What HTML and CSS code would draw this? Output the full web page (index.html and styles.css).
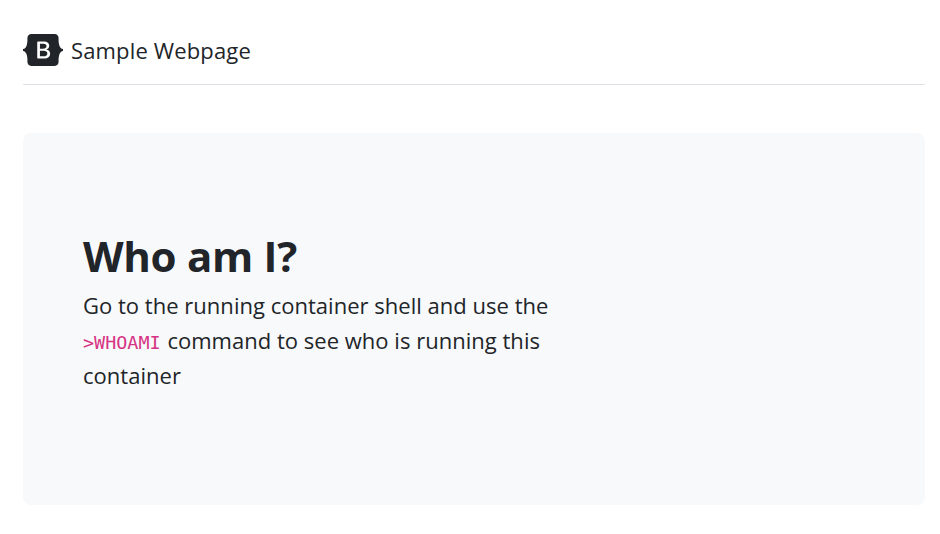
FILE: index.html
```html
<!DOCTYPE html>
<html lang="en">
<head>
<meta charset="utf-8">
<title>Sample Webpage</title>
<link rel="stylesheet" href="styles.css">
</head>
<body>
<main class="container">
  <header class="header">
    <a class="brand" href="#">
      <svg class="logo" width="40" height="32" viewBox="0 0 118 94" role="img" aria-label="Bootstrap"><path fill-rule="evenodd" clip-rule="evenodd" fill="currentColor" d="M24.509 0c-6.733 0-11.715 5.893-11.492 12.284.214 6.14-.064 14.092-2.066 20.577C8.943 39.365 5.547 43.485 0 44.014v5.972c5.547.529 8.943 4.649 10.951 11.153 2.002 6.485 2.28 14.437 2.066 20.577C12.794 88.106 17.776 94 24.51 94H93.5c6.733 0 11.714-5.893 11.491-12.284-.214-6.14.064-14.092 2.066-20.577 2.009-6.504 5.396-10.624 10.943-11.153v-5.972c-5.547-.529-8.934-4.649-10.943-11.153-2.002-6.484-2.28-14.437-2.066-20.577C105.214 5.894 100.233 0 93.5 0H24.508zM80 57.863C80 66.663 73.436 72 62.543 72H44a2 2 0 01-2-2V24a2 2 0 012-2h18.437c9.083 0 15.044 4.92 15.044 12.474 0 5.302-4.01 10.049-9.119 10.88v.277C75.317 46.394 80 51.21 80 57.863zM60.521 28.34H49.948v14.934h8.905c6.884 0 10.68-2.772 10.68-7.727 0-4.643-3.264-7.207-9.012-7.207zM49.948 49.2v16.458H60.91c7.167 0 10.964-2.876 10.964-8.281 0-5.406-3.903-8.178-11.425-8.178H49.948z"/></svg>
      <span class="title">Sample Webpage</span>
    </a>
  </header>
  <section class="hero">
    <h1 class="heading">Who am I?</h1>
    <p class="lead">Go to the running container shell and use the<br><code class="command">&gt;WHOAMI</code> command to see who is running this<br>container</p>
  </section>
</main>
</body>
</html>
```
FILE: styles.css
```css
* { box-sizing: border-box; }
body { margin: 0; background: #fff; color: #212529; font-family: "Open Sans", sans-serif; }
.container { padding: 32px 15px 0 23px; }
.header { height: 53px; border-bottom: 1px solid #dee2e6; margin-bottom: 48px; }
.brand { display: flex; align-items: center; height: 36px; color: inherit; text-decoration: none; }
.logo { margin-right: 8px; }
.title { font-size: 22px; line-height: 36px; font-weight: 400; letter-spacing: 0.15px; white-space: nowrap; }
.hero { height: 372px; padding: 95px 60px; background: #f8f9fa; border-radius: 8px; }
.heading { margin: 0 0 4px; font-size: 42px; line-height: 56px; font-weight: 700; letter-spacing: -0.3px; white-space: nowrap; }
.lead { margin: 0; font-size: 22px; line-height: 35px; font-weight: 400; letter-spacing: 0.02px; white-space: nowrap; }
.command { margin-right: 1px; font-family: "DejaVu Sans Mono", monospace; font-size: 18.4px; line-height: 1; color: #d63384; }
```
